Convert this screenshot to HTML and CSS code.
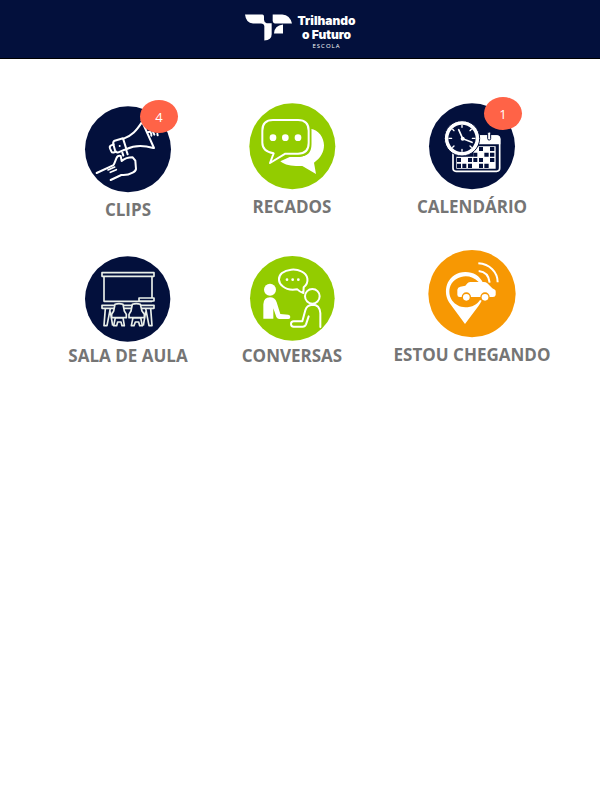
FILE: index.html
```html
<!DOCTYPE html>
<html lang="pt-BR">
  <head>
    <meta charset="UTF-8" />
    <meta name="viewport" content="width=device-width, initial-scale=1.0" />
    <title>Trilhando o Futuro</title>
    <link rel="stylesheet" href="styles.css">
  </head>
  <body>
    <header class="header">
      <a class="logo" href="#">
        <svg class="logo-mark" viewBox="0 0 141 80" aria-hidden="true">
          <path fill="#fff" d="M0 1H52Q57 1 57 7V17Q57 25 65 27H80V60Q80 78 58 79V36Q57 28 48 28H24Q3 27 0 1Z" />
          <path fill="#fff" d="M83 1H112Q135 3 141 28H89Q83 27 83 20Z" />
          <path fill="#fff" d="M114 31V58H87Q88 34 114 31Z" />
        </svg>
        <span class="logo-text">
          <span class="logo-name">Trilhando</span>
          <span class="logo-name">o Futuro</span>
          <span class="logo-sub">ESCOLA</span>
        </span>
      </a>
    </header>

    <main class="menu">
      <a class="item item-low" href="#">
        <span class="icon">
          <svg viewBox="27 45 264 264" aria-hidden="true">
            <circle cx="159" cy="178" r="129" fill="#03103c" />
            <g fill="none" stroke="#fff" stroke-width="6" stroke-linejoin="round" stroke-linecap="round">
              <path d="M119 152L144 145L154 177L130 187Q123 189 120 181L115 163Q113 155 119 152Z" />
              <path d="M116 163L107 167Q103 169 105 175L109 184Q111 189 118 187L122 185" />
              <path d="M146 146C171 137 184 122 200 98M155 177C180 165 209 167 235 174M200 92L237 174" />
              <path d="M217 127Q230 121 229 137M232 121L238 134M247 131L248 136M142 188L145 197M154 181L158 193" />
              <path d="M65 249L114 226Q117 224 119 218L124 205Q128 195 137 198L140 213Q153 202 173 202L181 212L183 237Q182 244 173 248Q157 257 139 255L107 270" />
              <path d="M99 240L119 231M106 247L124 239" stroke-width="5" />
            </g>
            <circle cx="134" cy="168" r="3" fill="#fff" />
          </svg>
          <span class="badge">4</span>
        </span>
        <span class="label">CLIPS</span>
      </a>

      <a class="item" href="#">
        <span class="icon">
          <svg viewBox="39 36 264 264" aria-hidden="true">
            <circle cx="172" cy="169" r="129" fill="#93cc00" />
            <path fill="#fff" d="M227 116C251 120 267 142 267 166C267 186 257 205 237 218L243 252L202 228C176 229 151 227 136 214L164 201H194Q226 198 227 160Z" />
            <path fill="#93cc00" stroke="#93cc00" stroke-width="17" d="M110 90H193Q221 90 221 118V163Q221 191 193 191H151L105 218L115 190Q82 184 82 158V118Q82 90 110 90Z" />
            <path fill="#93cc00" stroke="#fff" stroke-width="6" stroke-linejoin="round" d="M114 90H189Q221 90 221 122V159Q221 191 189 191H151L105 219L116 190Q82 184 82 158V122Q82 90 114 90Z" />
            <g fill="#fff">
              <circle cx="114" cy="143" r="10" />
              <circle cx="151" cy="143" r="10" />
              <circle cx="189" cy="143" r="10" />
            </g>
          </svg>
        </span>
        <span class="label">RECADOS</span>
      </a>

      <a class="item" href="#">
        <span class="icon">
          <svg viewBox="54 36 264 264" aria-hidden="true">
            <circle cx="186" cy="169" r="129" fill="#03103c" />
            <rect x="129" y="138" width="140" height="106" rx="9" fill="#03103c" stroke="#fff" stroke-width="5" />
            <path fill="#fff" d="M195 136H259Q271 136 271 148V163H195Z" />
            <rect x="233" y="126" width="9" height="24" rx="4" fill="#fff" stroke="#03103c" stroke-width="3" />
            <g fill="#fff">
              <path d="M139 200H257V236H139ZM190 169H257V201H190Z" />
            </g>
            <g fill="#03103c">
              <path d="M207 171H219V183H207ZM240 171H253V183H240ZM190 188H202V200H190ZM223 188H236V200H223ZM240 188H253V200H240Z" />
              <path d="M141 204H153V216H141ZM174 204H186V216H174ZM190 204H202V216H190ZM207 204H219V216H207ZM240 204H253V216H240Z" />
              <path d="M141 221H153V234H141ZM157 221H169V234H157ZM174 221H186V234H174ZM207 221H219V234H207ZM223 221H236V234H223Z" />
            </g>
            <circle cx="156" cy="145" r="53" fill="#fff" stroke="#03103c" stroke-width="3" />
            <circle cx="156" cy="145" r="41" fill="#03103c" />
            <g fill="none" stroke="#fff" stroke-width="4" stroke-linecap="round">
              <path d="M156 106V112M156 178V184M117 145H125M187 145H195M128 118L132 122M184 118L180 122M128 172L132 168M184 172L180 168" />
              <path d="M146 119L158 146L186 157" stroke-width="5" />
            </g>
            <circle cx="158" cy="146" r="6" fill="#fff" />
          </svg>
          <span class="badge">1</span>
        </span>
        <span class="label">CALENDÁRIO</span>
      </a>

      <a class="item item-tight" href="#">
        <span class="icon">
          <svg viewBox="72 30 264 264" aria-hidden="true">
            <circle cx="203" cy="162" r="128" fill="#03103c" />
            <g fill="#03103c" stroke="#e9efe9" stroke-width="5" stroke-linejoin="round">
              <path d="M132 94V169H276V94" />
              <rect x="126" y="83" width="156" height="11" />
              <rect x="237" y="159" width="45" height="9" />
              <path d="M136 190L132 242H141L151 190M272 190L276 242H267L257 190M151 200L158 242M257 200L250 242" />
              <rect x="126" y="181" width="156" height="9" />
              <path d="M166 218L161 242H170L173 231H183L186 242H193L189 218ZM219 218L214 242H222L226 231H236L239 242H247L242 218Z" />
              <path d="M165 178Q177 174 189 178L193 198L199 208V218H155V208L161 198Z" />
              <path d="M217 178Q229 174 241 178L246 198L253 208V218H207V208L213 198Z" />
            </g>
          </svg>
        </span>
        <span class="label">SALA DE AULA</span>
      </a>

      <a class="item item-tight" href="#">
        <span class="icon">
          <svg viewBox="39 30 264 264" aria-hidden="true">
            <circle cx="172" cy="160" r="127" fill="#93cc00" />
            <g fill="#fff">
              <circle cx="105" cy="134" r="18" />
              <path d="M85 221V178Q86 157 105 157Q120 157 125 172L136 207L160 209Q166 210 166 216Q166 222 160 222H132Q126 221 124 216L115 190V221Z" />
              <circle cx="156" cy="104" r="4" />
              <circle cx="173" cy="104" r="4" />
              <circle cx="190" cy="104" r="4" />
            </g>
            <g fill="none" stroke="#fff" stroke-width="6" stroke-linecap="round" stroke-linejoin="round">
              <path d="M205 144L206 127C224 112 220 88 199 79C181 70 155 73 141 84C128 95 129 113 143 124C155 134 171 136 187 133Q195 141 205 144Z" />
              <circle cx="232" cy="154" r="22" />
              <path d="M256 246V204Q254 179 233 179Q215 180 211 196L202 229H176Q168 229 168 237Q168 245 176 245H203Q210 245 213 238L221 214" />
            </g>
          </svg>
        </span>
        <span class="label">CONVERSAS</span>
      </a>

      <a class="item" href="#">
        <span class="icon">
          <svg viewBox="114 30 264 264" aria-hidden="true">
            <circle cx="246" cy="161" r="131" fill="#f79803" />
            <path fill="#fff" d="M225 252L177 187C154 148 176 96 226 96C251 96 269 108 279 128L266 126C239 97 196 107 182 136C168 169 193 202 226 202C246 202 262 193 270 180L275 182Q271 190 266 197Z" />
            <path fill="#fff" d="M202 164V149Q203 141 211 140L226 137L233 129Q236 126 242 126H281Q288 126 292 130L307 145L316 150Q318 153 317 165Q316 171 309 171H299A14 14 0 0 0 271 171H243A14 14 0 0 0 215 171H209Q202 171 202 164Z" />
            <circle cx="229" cy="172" r="10" fill="#fff" />
            <circle cx="285" cy="172" r="10" fill="#fff" />
            <g fill="none" stroke="#fff" stroke-width="6">
              <path d="M266 93Q296 96 299 128" />
              <path d="M265 70C299 72 323 96 323 127" />
            </g>
          </svg>
        </span>
        <span class="label">ESTOU CHEGANDO</span>
      </a>
    </main>
  </body>
</html>
```
FILE: styles.css
```css
body {
  margin: 0;
  background-color: white;
  font-family: "Open Sans", sans-serif;
}
a {
  color: inherit;
  text-decoration: none;
}

.header {
  display: flex;
  justify-content: center;
  padding: 14px 0px 8px 0px;
  background-color: #03103c;
  border-bottom: 1px solid black;
}
.logo {
  display: flex;
  gap: 6px;
  color: white;
}
.logo-mark {
  width: 47px;
  height: 27px;
}
.logo-text {
  display: flex;
  flex-direction: column;
  align-items: center;
}
.logo-name {
  font-family: "Inter", sans-serif;
  font-size: 12px;
  font-weight: 900;
  line-height: 14px;
}
.logo-sub {
  font-size: 6px;
  line-height: 8px;
  letter-spacing: 1px;
}

.menu {
  display: grid;
  grid-template-columns: 164fr 164fr 196fr;
  row-gap: 28px;
  padding: 43px 30px 0px 46px;
}
.item {
  display: flex;
  flex-direction: column;
  align-items: center;
  gap: 5px;
}
.item-low {
  padding-top: 3px;
}
.item-tight {
  padding-top: 5px;
  gap: 1px;
}
.icon {
  position: relative;
  width: 88px;
  height: 88px;
}
.icon svg {
  display: block;
  width: 100%;
}
.badge {
  position: absolute;
  top: -5px;
  left: 56px;
  width: 38px;
  height: 33px;
  border-radius: 50%;
  background-color: #ff6347;
  color: white;
  font-size: 13px;
  line-height: 34px;
  text-align: center;
}
.label {
  color: #757575;
  font-size: 17px;
  font-weight: bold;
  line-height: 24px;
  white-space: nowrap;
}
```
